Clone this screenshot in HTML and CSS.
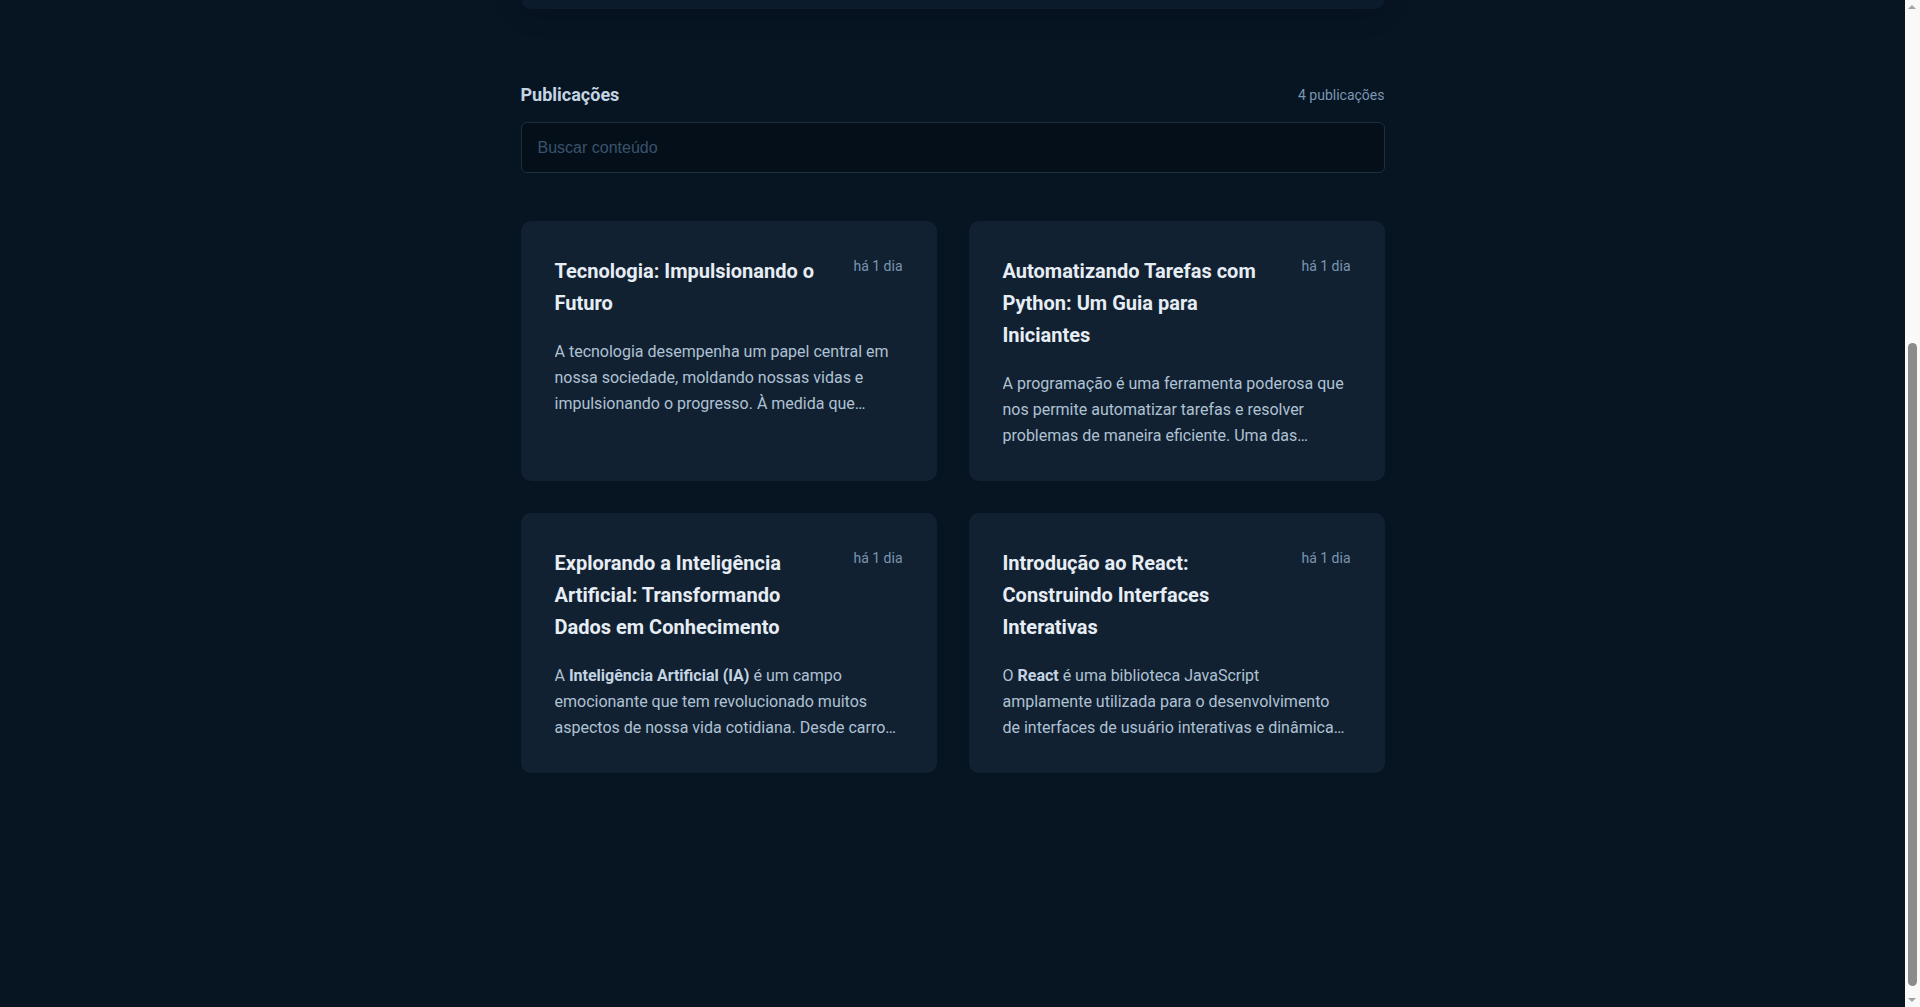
FILE: index.html
```html
<!DOCTYPE html>
<html lang="pt-BR">
<head>
<meta charset="utf-8">
<title>GitHub Blog</title>
<link rel="stylesheet" href="styles.css">
</head>
<body>
<header class="cover">
  <div class="logo">GITHUB BLOG</div>
</header>
<main class="container">
  <section class="profile">
    <div class="avatar"></div>
    <div class="profile-info">
      <div class="profile-top">
        <h1>Cameron Williamson</h1>
        <a class="gh-link" href="#">GITHUB</a>
      </div>
      <p class="bio">Tristique volutpat pulvinar vel massa, pellentesque egestas. Eu viverra massa quam dignissim aenean malesuada suscipit. Nunc, volutpat pulvinar vel mass.</p>
      <ul class="stats">
        <li>cameronwll</li>
        <li>Rocketseat</li>
        <li>32 seguidores</li>
      </ul>
    </div>
  </section>

  <section class="publications">
    <div class="pub-header">
      <h2>Publicações</h2>
      <span class="pub-count">4 publicações</span>
    </div>
    <input class="search" type="text" placeholder="Buscar conteúdo">

    <div class="posts">
      <a class="post" href="#">
        <div class="post-head">
          <h3>Tecnologia: Impulsionando o Futuro</h3>
          <span class="post-date">há 1 dia</span>
        </div>
        <p class="excerpt">A tecnologia desempenha um papel central em nossa sociedade, moldando nossas vidas e impulsionando o progresso. À medida que avançamos no século XXI, a tecnologia se torna cada vez mais presente.</p>
      </a>
      <a class="post" href="#">
        <div class="post-head">
          <h3>Automatizando Tarefas com Python: Um Guia para Iniciantes</h3>
          <span class="post-date">há 1 dia</span>
        </div>
        <p class="excerpt">A programação é uma ferramenta poderosa que nos permite automatizar tarefas e resolver problemas de maneira eficiente. Uma das linguagens mais populares para automação é o Python.</p>
      </a>
      <a class="post" href="#">
        <div class="post-head">
          <h3>Explorando a Inteligência Artificial: Transformando Dados em Conhecimento</h3>
          <span class="post-date">há 1 dia</span>
        </div>
        <p class="excerpt">A <strong>Inteligência Artificial (IA)</strong> é um campo emocionante que tem revolucionado muitos aspectos de nossa vida cotidiana. Desde carros autônomos até assistentes virtuais inteligentes.</p>
      </a>
      <a class="post" href="#">
        <div class="post-head">
          <h3>Introdução ao React: Construindo Interfaces Interativas</h3>
          <span class="post-date">há 1 dia</span>
        </div>
        <p class="excerpt">O <strong>React</strong> é uma biblioteca JavaScript amplamente&nbsp;utilizada para o desenvolvimento de interfaces de usuário interativas e dinâmicas. Criado pelo Facebook, ele se tornou muito popular.</p>
      </a>
    </div>
  </section>
</main>

<div class="scrollbar" aria-hidden="true">
  <span class="sb-arrow sb-up"></span>
  <span class="sb-thumb"></span>
  <span class="sb-arrow sb-down"></span>
</div>

<script src="script.js"></script>
</body>
</html>
```

FILE: styles.css
```css
* {
  box-sizing: border-box;
  margin: 0;
  padding: 0;
}

html {
  background: #071422;
}

body {
  margin-right: 15px;
  background: #071422;
  color: #afc2d4;
  font-family: Roboto, "Noto Sans", sans-serif;
  font-size: 16px;
  line-height: 1.6;
}

.cover {
  height: 398px;
  background: linear-gradient(180deg, #0b1b2b 0%, #071422 100%);
  display: flex;
  justify-content: center;
  padding-top: 64px;
}

.logo {
  color: #3294f8;
  font-size: 24px;
  font-weight: 700;
  letter-spacing: 2px;
}

.container {
  width: 864px;
  margin: 0 auto;
  padding-bottom: 234px;
}

.profile {
  margin-top: -88px;
  height: 212px;
  background: #0b1b2b;
  border-radius: 10px;
  box-shadow: 0 2px 28px rgba(0, 0, 0, 0.2);
  padding: 32px 40px;
  display: flex;
  gap: 32px;
}

.avatar {
  width: 148px;
  height: 148px;
  border-radius: 8px;
  background: #1c2f41;
  flex-shrink: 0;
}

.profile-info {
  flex: 1;
  display: flex;
  flex-direction: column;
  gap: 8px;
}

.profile-top {
  display: flex;
  justify-content: space-between;
  align-items: center;
}

.profile-top h1 {
  color: #e7edf4;
  font-size: 24px;
}

.gh-link {
  color: #3294f8;
  font-size: 12px;
  font-weight: 700;
  text-decoration: none;
}

.stats {
  list-style: none;
  display: flex;
  gap: 24px;
  margin-top: auto;
  color: #c4d4e3;
}

.publications {
  margin-top: 72px;
}

.pub-header {
  display: flex;
  justify-content: space-between;
  align-items: center;
  margin-bottom: 12px;
}

.pub-header h2 {
  color: #c4d4e3;
  font-size: 18px;
  font-weight: 700;
  line-height: 1.6;
}

.pub-count {
  color: #7b96b2;
  font-size: 14px;
}

.search {
  display: block;
  width: 100%;
  padding: 12px 16px;
  background: #040f1a;
  border: 1px solid #1c2f41;
  border-radius: 6px;
  color: #c4d4e3;
  font-family: "Liberation Sans", Arial, sans-serif;
  font-size: 16px;
  line-height: 1.6;
  outline: none;
}

.search::placeholder {
  color: #3a536b;
}

.posts {
  margin-top: 48px;
  display: grid;
  grid-template-columns: 1fr 1fr;
  gap: 32px;
}

.post {
  display: block;
  height: 260px;
  padding: 32px;
  background: #112131;
  border: 2px solid transparent;
  border-radius: 10px;
  text-decoration: none;
  overflow: hidden;
}

.post-head {
  display: flex;
  align-items: flex-start;
  justify-content: space-between;
  gap: 24px;
  margin-bottom: 20px;
}

.post-head h3 {
  flex: 0 1 280px;
  color: #e7edf4;
  font-size: 20px;
  font-weight: 700;
  line-height: 1.6;
}

.post-date {
  flex-shrink: 0;
  color: #7b96b2;
  font-size: 14px;
  line-height: 1.6;
}

.excerpt {
  color: #afc2d4;
  display: -webkit-box;
  -webkit-line-clamp: 3;
  -webkit-box-orient: vertical;
  overflow: hidden;
}

.excerpt strong {
  color: #c4d4e3;
}

.scrollbar {
  position: fixed;
  top: 0;
  right: 0;
  width: 15px;
  height: 100vh;
  background: #f9f9f9;
  z-index: 10;
}

.sb-thumb {
  position: absolute;
  left: 3px;
  top: 343px;
  width: 9px;
  height: 643px;
  border-radius: 5px;
  background: #8b8b8b;
}

.sb-arrow {
  position: absolute;
  left: 3px;
  width: 0;
  height: 0;
  border-left: 4.5px solid transparent;
  border-right: 4.5px solid transparent;
}

.sb-up {
  top: 5px;
  border-bottom: 4px solid #a3a3a3;
}

.sb-down {
  bottom: 5px;
  border-top: 4px solid #a3a3a3;
}
```

FILE: script.js
```js
function toBottom() {
  window.scrollTo(0, document.documentElement.scrollHeight);
}
toBottom();
window.addEventListener('load', toBottom);
```
